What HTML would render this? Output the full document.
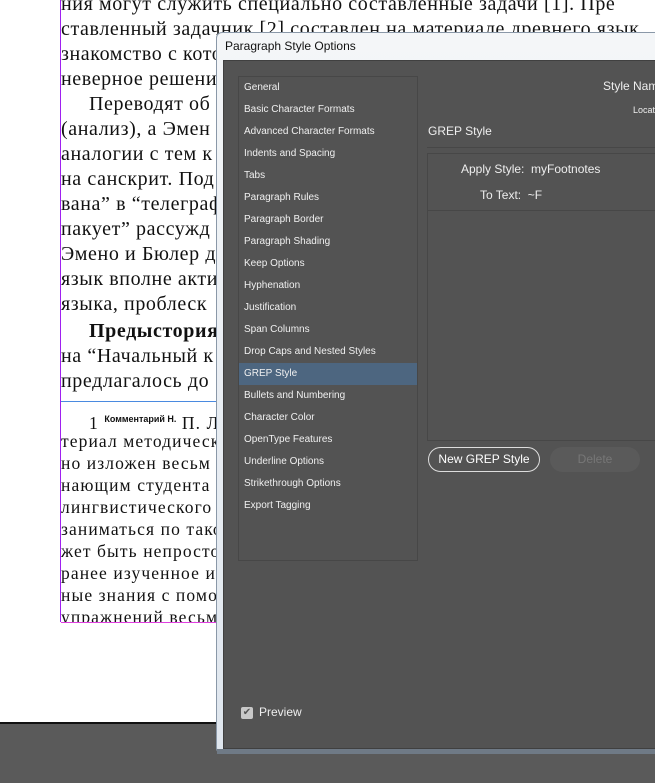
<!DOCTYPE html>
<html><head><meta charset="utf-8"><style>
*{margin:0;padding:0;box-sizing:border-box}
body{width:655px;height:783px;overflow:hidden;background:#5a5a5a;position:relative;font-family:"Liberation Sans",sans-serif}
#page{position:absolute;left:0;top:0;width:655px;height:724px;background:#fff;border-bottom:2px solid #111}
#col{position:absolute;left:60px;top:-8px;width:600px;height:630px;border-left:1px solid #a020f0;font-family:"Liberation Serif","DejaVu Serif",serif;color:#111;font-size:20px;letter-spacing:0.6px;white-space:nowrap;overflow:hidden}
#col .l{height:25px;line-height:25px}
#col .f{height:22px;line-height:22px;font-size:17.5px;letter-spacing:1.1px}
#col .i{padding-left:28px}
#rule{position:absolute;left:61px;top:401px;width:600px;height:1px;background:#4a8ae0}
#bot{position:absolute;left:61px;top:622px;width:600px;height:1px;background:#e040e0}
#dlg{position:absolute;left:216px;top:32px;width:460px;height:722px;border-radius:6px;background:linear-gradient(#f4f6f8,#dfe6ee);border:1px solid #8a98a8}
#title{position:absolute;left:8px;top:6px;font-size:12px;color:#111}
#body{position:absolute;left:6px;top:27px;right:0;height:689px;background:#535353;border:1px solid #404040}
#bl{position:absolute;left:0;top:716px;width:460px;height:5px;background:#6f7a86}
#list{position:absolute;left:14px;top:15px;width:180px;height:485px;border:1px solid #474747}
#list div{height:22px;line-height:22px;padding-left:5px;font-size:10px;color:#f0f0f0}
#list .sel{background:#4d6680}
.t{position:absolute;color:#eee;font-size:12px;white-space:nowrap}
</style></head><body>
<div id="page">
<div id="col">
<div class="l">ния могут служить специально составленные задачи [1]. Пре</div>
<div class="l">ставленный задачник [2] составлен на материале древнего язык</div>
<div class="l">знакомство с которыми необязательно. Однако для</div>
<div class="l">неверное решение</div>
<div class="l i">Переводят об</div>
<div class="l">(анализ), а Эмен</div>
<div class="l">аналогии с тем к</div>
<div class="l">на санскрит. Под</div>
<div class="l">вана” в “телеграф</div>
<div class="l">пакует” рассужд</div>
<div class="l">Эмено и Бюлер д</div>
<div class="l">язык вполне акти</div>
<div class="l">языка, проблеск</div>
<div class="l i" style="font-weight:bold;height:27px;line-height:29px">Предыстория</div>
<div class="l">на “Начальный к</div>
<div class="l">предлагалось до</div>
<div style="height:12px"></div>
<div class="f i" style="height:24px;line-height:26px">1 <sup style="font-family:'Liberation Sans';font-size:9px;font-weight:bold;letter-spacing:0">Комментарий Н.</sup> П. Л</div>
<div class="f">териал методическ</div>
<div class="f">но изложен весьм</div>
<div class="f">нающим студента</div>
<div class="f">лингвистического</div>
<div class="f">заниматься по тако</div>
<div class="f">жет быть непросто</div>
<div class="f">ранее изученное и у</div>
<div class="f">ные знания с помо</div>
<div class="f">упражнений весьм</div>
</div>
<div id="rule"></div><div id="bot"></div>
</div>
<div id="dlg">
<div id="title">Paragraph Style Options</div>
<div id="body">
<div id="list">
<div>General</div><div>Basic Character Formats</div><div>Advanced Character Formats</div><div>Indents and Spacing</div><div>Tabs</div><div>Paragraph Rules</div><div>Paragraph Border</div><div>Paragraph Shading</div><div>Keep Options</div><div>Hyphenation</div><div>Justification</div><div>Span Columns</div><div>Drop Caps and Nested Styles</div><div class="sel">GREP Style</div><div>Bullets and Numbering</div><div>Character Color</div><div>OpenType Features</div><div>Underline Options</div><div>Strikethrough Options</div><div>Export Tagging</div>
</div>
<div class="t" style="left:379px;top:18px">Style Name</div>
<div class="t" style="left:409px;top:44px;font-size:9px">Location</div>
<div class="t" style="left:204px;top:63px">GREP Style</div>
<div style="position:absolute;left:203px;top:86px;width:260px;height:1px;background:#474747"></div>
<div style="position:absolute;left:203px;top:92px;width:260px;height:288px;border:1px solid #474747"></div>
<div style="position:absolute;left:204px;top:149px;width:260px;height:1px;background:#474747"></div>
<div class="t" style="left:237px;top:101px">Apply Style:&nbsp; myFootnotes</div>
<div class="t" style="left:256px;top:127px">To Text:&nbsp; ~F</div>
<div style="position:absolute;left:204px;top:386px;width:112px;height:25px;border:1px solid #ddd;border-radius:13px;color:#fff;font-size:12px;line-height:23px;text-align:center">New GREP Style</div>
<div style="position:absolute;left:326px;top:386px;width:90px;height:25px;background:#5a5a5a;border-radius:13px;color:#777;font-size:12px;line-height:25px;text-align:center">Delete</div>
<div style="position:absolute;left:17px;top:646px;width:12px;height:12px;background:#c8c8c8;border-radius:2px;color:#555;font-size:10px;line-height:12px;text-align:center">✔</div>
<div class="t" style="left:35px;top:644px">Preview</div>
</div>
<div id="bl"></div>
</div>
</body></html>
